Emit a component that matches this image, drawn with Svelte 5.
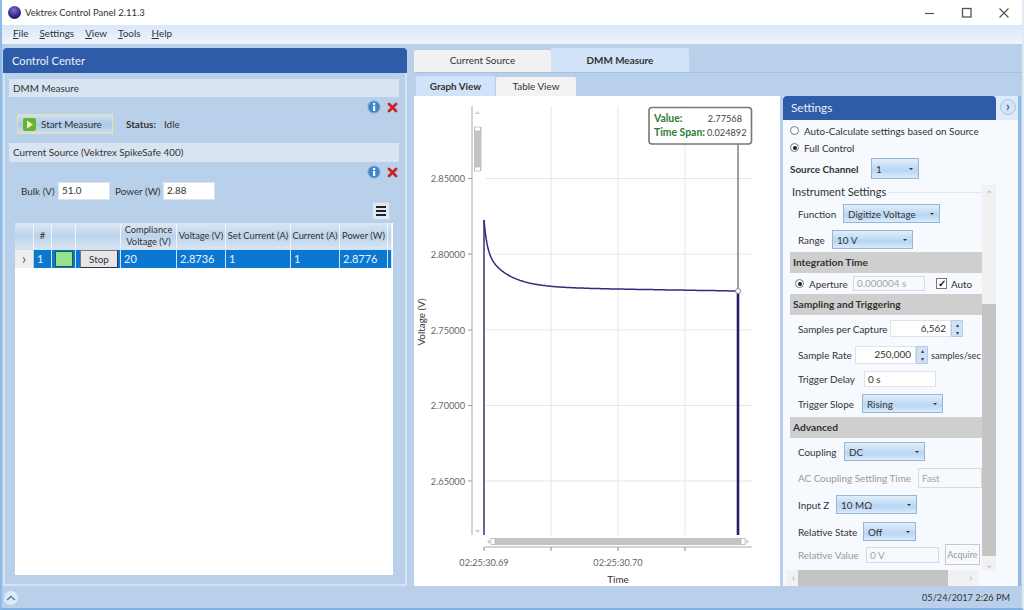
<script>
    const columns = ["", "#", "", "", "Compliance Voltage (V)", "Voltage (V)", "Set Current (A)", "Current (A)", "Power (W)", ""];

    // voltage settling after the current pulse starts
    const curvePoints = [];
    for (let x = 484; x <= 738; x += 1) {
        const d = x - 484;
        const y = 291 - 30 * Math.exp(-d / 3) - 37 * Math.exp(-d / 22) - (4 * (738 - x)) / 254;
        curvePoints.push(`${x} ${y.toFixed(1)}`);
    }
    const curve = "M" + curvePoints.join(" L");

    const yTicks = [
        { y: 178.5, label: "2.85000" },
        { y: 254, label: "2.80000" },
        { y: 330, label: "2.75000" },
        { y: 405.5, label: "2.70000" },
        { y: 481, label: "2.65000" }
    ];
    const xGrid = [551, 618, 685];
</script>

{#snippet select(text, width)}
    <div class="select" style="width: {width}px">
        <span>{text}</span><i class="caret"></i>
    </div>
{/snippet}

{#snippet info()}
    <svg class="tool" width="14" height="14" viewBox="0 0 14 14">
        <circle cx="7" cy="7" r="6.2" fill="#3f86c9" stroke="#8fbbe2" />
        <rect x="6" y="6" width="2.2" height="5" fill="#fff" />
        <circle cx="7.1" cy="4" r="1.2" fill="#fff" />
    </svg>
{/snippet}

{#snippet remove()}
    <svg class="tool" width="11" height="11" viewBox="0 0 11 11">
        <path d="M2 2 L9 9 M9 2 L2 9" stroke="#c8242b" stroke-width="2.8" stroke-linecap="round" />
    </svg>
{/snippet}

{#snippet spin()}
    <div class="spin"><b>▴</b><b>▾</b></div>
{/snippet}

<div class="window">
    <header class="titlebar">
        <div class="logo"></div>
        <span>Vektrex Control Panel 2.11.3</span>
        <div class="controls">
            <svg width="12" height="12" viewBox="0 0 12 12"><path d="M1 6.5 H10" stroke="#555" stroke-width="1.2" /></svg>
            <svg width="12" height="12" viewBox="0 0 12 12"><rect x="1.5" y="1.5" width="8.5" height="8.5" fill="none" stroke="#555" stroke-width="1.3" /></svg>
            <svg width="12" height="12" viewBox="0 0 12 12"><path d="M1.5 1.5 L10.5 10.5 M10.5 1.5 L1.5 10.5" stroke="#555" stroke-width="1.2" /></svg>
        </div>
    </header>

    <nav class="menu">
        <span><u>F</u>ile</span>
        <span><u>S</u>ettings</span>
        <span><u>V</u>iew</span>
        <span><u>T</u>ools</span>
        <span><u>H</u>elp</span>
    </nav>

    <main class="main">
        <section class="control">
            <h2 class="panel-head control-head">Control Center</h2>
            <div class="control-body">
                <div class="band">DMM Measure</div>
                <div class="tools">{@render info()}{@render remove()}</div>
                <div class="measure">
                    <button class="start">
                        <svg width="13" height="13" viewBox="0 0 13 13">
                            <rect width="13" height="13" rx="2" fill="#69b32b" />
                            <path d="M4 2.5 L10 6.5 L4 10.5 Z" fill="#e9f6c9" />
                        </svg>
                        Start Measure
                    </button>
                    <strong>Status:</strong>
                    <span>Idle</span>
                </div>
                <div class="band second">Current Source (Vektrex SpikeSafe 400)</div>
                <div class="tools">{@render info()}{@render remove()}</div>
                <div class="bulk">
                    <span>Bulk (V)</span>
                    <div class="input">51.0</div>
                    <span>Power (W)</span>
                    <div class="input">2.88</div>
                </div>
                <div class="grid-tools">
                    <div class="burger"><i></i><i></i><i></i></div>
                </div>
                <div class="table">
                    <div class="thead">
                        {#each columns as col}
                            <div class="th">{col}</div>
                        {/each}
                    </div>
                    <div class="tbody">
                        <div class="arrow">›</div>
                        <div class="td">1</div>
                        <div class="td"><div class="swatch"></div></div>
                        <div class="td"><button class="stop">Stop</button></div>
                        <div class="td">20</div>
                        <div class="td">2.8736</div>
                        <div class="td">1</div>
                        <div class="td">1</div>
                        <div class="td">2.8776</div>
                        <div class="td"></div>
                    </div>
                </div>
            </div>
        </section>

        <section class="center">
            <div class="tabs">
                <div class="tab">Current Source</div>
                <div class="tab active">DMM Measure</div>
            </div>
            <div class="subtabs">
                <div class="subtab active">Graph View</div>
                <div class="subtab">Table View</div>
            </div>
            <div class="chart">
                <svg width="366" height="490" viewBox="414 96 366 490">
                    {#each yTicks as t}
                        <line x1="486" x2="752" y1={t.y} y2={t.y} stroke="#e6e6e6" />
                        <line x1="468" x2="472" y1={t.y} y2={t.y} stroke="#999" />
                        <text x="465" y={t.y + 3.5} text-anchor="end" class="tick">{t.label}</text>
                    {/each}
                    {#each xGrid as x}
                        <line x1={x} x2={x} y1="106" y2="535" stroke="#e6e6e6" />
                        <line x1={x} x2={x} y1="547" y2="551" stroke="#888" />
                    {/each}
                    <line x1="484" x2="484" y1="547" y2="551" stroke="#888" />

                    <line x1="472" x2="472" y1="106" y2="535" stroke="#aaa" />
                    <line x1="484" x2="752" y1="547" y2="547" stroke="#aaa" />

                    <path d="M477.5 111 l-2.5 3 h5 Z" fill="#ccc" />
                    <rect x="474" y="127" width="7.5" height="44" fill="#c4c4c4" />
                    <rect x="474.5" y="127" width="6" height="4" fill="#fff" stroke="#aaa" stroke-width="0.6" />
                    <rect x="474.5" y="167" width="6" height="4" fill="#fff" stroke="#aaa" stroke-width="0.6" />
                    <path d="M477.5 533 l-2.5 -3 h5 Z" fill="#ccc" />

                    <rect x="491" y="538" width="254" height="7" fill="#c4c4c4" />
                    <rect x="491" y="538.5" width="4" height="6" fill="#fff" stroke="#aaa" stroke-width="0.6" />
                    <rect x="741" y="538.5" width="4" height="6" fill="#fff" stroke="#aaa" stroke-width="0.6" />
                    <path d="M487 541.5 l3 -2.5 v5 Z" fill="#ccc" />
                    <path d="M749 541.5 l-3 -2.5 v5 Z" fill="#ccc" />

                    <line x1="738" x2="738" y1="144" y2="291" stroke="#777" stroke-width="1.4" />
                    <line x1="484" x2="484" y1="535" y2="220" stroke="#55558f" stroke-width="1.8" />
                    <path d={curve} fill="none" stroke="#2e2c7e" stroke-width="1.5" />
                    <line x1="738" x2="738" y1="291" y2="535" stroke="#232265" stroke-width="2.6" />
                    <circle cx="738" cy="291" r="2.5" fill="#fff" stroke="#888" />

                    <rect x="649" y="107.5" width="102.5" height="36.5" rx="3" fill="#fff" stroke="#777" stroke-width="1.6" />
                    <text x="654" y="122" class="tip-key">Value:</text>
                    <text x="742" y="122" text-anchor="end" class="tip-val">2.77568</text>
                    <text x="654" y="136" class="tip-key">Time Span:</text>
                    <text x="746.5" y="136" text-anchor="end" class="tip-val">0.024892</text>

                    <text x="484" y="566" text-anchor="middle" class="tick">02:25:30.69</text>
                    <text x="618" y="566" text-anchor="middle" class="tick">02:25:30.70</text>
                    <text x="618" y="583" text-anchor="middle" class="axis">Time</text>
                    <text x="0" y="0" transform="translate(424.5 322) rotate(-90)" text-anchor="middle" class="axis">Voltage (V)</text>
                </svg>
            </div>
        </section>

        <section class="settings">
            <div class="settings-top">
                <h2 class="panel-head settings-head">Settings</h2>
                <div class="expand">›</div>
            </div>
            <div class="settings-body">
                <label class="radio-row"><i class="radio"></i>Auto-Calculate settings based on Source</label>
                <label class="radio-row"><i class="radio on"></i>Full Control</label>
                <div class="channel">
                    <strong>Source Channel</strong>
                    {@render select("1", 48)}
                </div>

                <div class="scroller">
                    <div class="legend"><span>Instrument Settings</span></div>
                    <div class="row fn">Function {@render select("Digitize Voltage", 97)}</div>
                    <div class="row range">Range {@render select("10 V", 81)}</div>
                    <h3 class="group">Integration Time</h3>
                    <div class="row aperture">
                        <i class="radio on"></i><span>Aperture</span>
                        <div class="input disabled">0.000004 s</div>
                        <i class="check">✓</i><span>Auto</span>
                    </div>
                    <h3 class="group">Sampling and Triggering</h3>
                    <div class="row capture">
                        Samples per Capture
                        <div class="spinner"><div class="input num">6,562</div>{@render spin()}</div>
                    </div>
                    <div class="row rate">
                        Sample Rate
                        <div class="spinner"><div class="input num">250,000</div>{@render spin()}</div>
                        <span class="unit">samples/sec</span>
                    </div>
                    <div class="row delay">Trigger Delay <div class="input">0 s</div></div>
                    <div class="row slope">Trigger Slope {@render select("Rising", 81)}</div>
                    <h3 class="group advanced">Advanced</h3>
                    <div class="row coupling">Coupling {@render select("DC", 81)}</div>
                    <div class="row settling muted">AC Coupling Settling Time <div class="input disabled">Fast</div></div>
                    <div class="row inputz">Input Z {@render select("10 MΩ", 81)}</div>
                    <div class="row relative"><span>Relative State</span> {@render select("Off", 53)}</div>
                    <div class="row relval muted">
                        Relative Value
                        <div class="input disabled">0 V</div>
                        <div class="acquire">Acquire</div>
                    </div>
                </div>

                <div class="vscroll">
                    <span class="vs-up">⌃</span>
                    <div class="vs-thumb"></div>
                    <span class="vs-down">⌄</span>
                </div>
                <div class="hscroll">
                    <span>‹</span>
                    <div class="hs-thumb"></div>
                    <span>›</span>
                </div>
            </div>
        </section>
    </main>

    <footer class="status">
        <div class="collapse">
            <svg width="10" height="6" viewBox="0 0 10 6"><path d="M1 5 L5 1.5 L9 5" fill="none" stroke="#5f7fa3" stroke-width="1.6" /></svg>
        </div>
        <span>05/24/2017 2:26 PM</span>
    </footer>
</div>

<style>
    :global(body) {
        margin: 0;
        overflow: hidden;
    }

    .window {
        width: 1024px;
        height: 610px;
        display: flex;
        flex-direction: column;
        font-family: Lato, "Open Sans", sans-serif;
        font-size: 9.9px;
        color: #333;
        background: #b9d0ea;
        box-sizing: border-box;
        border-left: 2px solid #8ebbe6;
        border-right: 2px solid #dfeaf5;
        border-bottom: 2px solid #7fb1e2;
        overflow: hidden;
    }

    .window * {
        box-sizing: border-box;
    }

    .titlebar {
        height: 25px;
        flex: none;
        background: #fff;
        display: flex;
        align-items: center;
        padding-left: 6px;
        gap: 4px;
        font-size: 9.5px;
    }

    .logo {
        width: 13px;
        height: 13px;
        border-radius: 50%;
        background: radial-gradient(circle at 45% 30%, #7a70d8, #2b1f78 65%, #1b1350);
    }

    .controls {
        margin-left: auto;
        display: flex;
        gap: 25px;
        padding-right: 12px;
    }

    .menu {
        height: 19px;
        flex: none;
        display: flex;
        align-items: flex-start;
        gap: 11px;
        padding: 2px 0 0 11px;
        background: linear-gradient(#d8e7f8, #eef5fc);
    }

    .main {
        flex: 1;
        display: flex;
        padding: 4px 0 0 1px;
        min-height: 0;
    }

    .panel-head {
        margin: 0;
        height: 25px;
        line-height: 25px;
        padding-left: 9px;
        color: #e8f0fa;
        font-size: 11.8px;
        font-weight: 400;
        background: #2f5ca8;
        border-radius: 4px 4px 0 0;
    }

    .control-head {
        font-size: 11.2px;
    }

    .control {
        width: 404px;
        height: 538px;
        display: flex;
        flex-direction: column;
    }

    .control-body {
        flex: 1;
        padding: 6px 6px 9px 4px;
        border: 2px solid #d4e3f3;
        border-top: none;
        background: #b9d0ea;
        display: flex;
        flex-direction: column;
    }

    .band {
        height: 18px;
        line-height: 18px;
        padding-left: 4px;
        background: #d8e4f1;
    }

    .band.second {
        height: 19px;
    }

    .tools {
        height: 20px;
        display: flex;
        justify-content: flex-end;
        align-items: center;
        gap: 6px;
        padding-right: 1px;
    }

    .measure {
        height: 26px;
        display: flex;
        align-items: flex-start;
        padding-left: 8px;
        line-height: 14px;
    }

    .measure strong {
        font-weight: 700;
        margin-left: 13px;
        width: 38px;
    }

    .start {
        width: 96px;
        height: 20px;
        margin-top: -3px;
        padding: 0 0 0 5px;
        display: flex;
        align-items: center;
        gap: 5px;
        font: inherit;
        color: #333;
        border: 1px solid #e8e3a4;
        background: linear-gradient(#cfe0f2, #a9c8e8 55%, #cfe0f2);
    }

    .bulk {
        height: 19px;
        margin-top: -1px;
        display: grid;
        grid-template-columns: 37px 57px 48px 52px;
        align-items: center;
        padding-left: 12px;
    }

    .bulk .input {
        width: 52px;
        height: 18px;
    }

    .input {
        background: #fff;
        border: 1px solid #dbe3ec;
        height: 100%;
        line-height: 15px;
        padding-left: 3px;
    }

    .grid-tools {
        height: 22px;
        display: flex;
        justify-content: flex-end;
        align-items: center;
        padding-right: 9px;
    }

    .burger {
        width: 18px;
        height: 18px;
        background: #dfe9f4;
        border: 1px solid #c3d3e4;
        display: flex;
        flex-direction: column;
        gap: 2px;
        align-items: center;
        justify-content: center;
    }

    .burger i {
        width: 10px;
        height: 2px;
        background: #222;
    }

    .table {
        flex: 1;
        margin: 1px 6px 0 6px;
        background: #fff;
    }

    .thead,
    .tbody {
        display: grid;
        grid-template-columns: 19px 18px 24px 45px 56px 49px 65px 49px 48px 4px;
    }

    .thead {
        height: 26px;
    }

    .th {
        background: linear-gradient(#dbe8f5, #bcd3ea 50%, #d7e5f3);
        border-right: 1px solid #eef4fa;
        display: flex;
        align-items: center;
        justify-content: center;
        text-align: center;
        font-size: 9.3px;
        line-height: 12px;
    }

    .tbody {
        height: 19px;
        border-top: 1px solid #cfe0f0;
    }

    .td {
        background: #0a78d0;
        color: #e8f3fc;
        border-right: 1px solid #cfe3f5;
        font-size: 11px;
        line-height: 18px;
        padding-left: 3px;
        position: relative;
    }

    .arrow {
        background: #eee;
        color: #666;
        text-align: center;
        font-size: 16px;
        line-height: 15px;
        border-right: 1px solid #ccc;
    }

    .swatch {
        position: absolute;
        left: 3px;
        top: 1px;
        width: 18px;
        height: 16px;
        background: #94e28a;
        border: 1px solid #1f5d4c;
    }

    .stop {
        position: absolute;
        left: 4px;
        top: 0;
        width: 38px;
        height: 18px;
        padding: 0;
        font: inherit;
        font-size: 9.9px;
        line-height: 14px;
        color: #333;
        background: #e6e6e6;
        border: 1px solid #778;
        border-right-color: #334;
        border-bottom-color: #334;
    }

    .center {
        width: 366px;
        margin-left: 7px;
        display: flex;
        flex-direction: column;
        height: 538px;
    }

    .tabs {
        height: 25px;
        flex: none;
        display: flex;
        align-items: flex-end;
        border-bottom: 1px solid #a5c1de;
        width: 608px;
    }

    .tab {
        width: 137px;
        height: 22px;
        background: #f1f1f1;
        text-align: center;
        line-height: 21px;
        border-radius: 2px 2px 0 0;
    }

    .tab.active {
        width: 138px;
        height: 24px;
        line-height: 25px;
        background: #d0e3f8;
        font-weight: 700;
    }

    .subtabs {
        display: flex;
        height: 23px;
        flex: none;
        align-items: flex-end;
        padding-left: 2px;
        gap: 1px;
    }

    .subtab {
        width: 80px;
        height: 19px;
        background: #f3f3f3;
        text-align: center;
        line-height: 19px;
        border-radius: 2px 2px 0 0;
    }

    .subtab.active {
        width: 79px;
        height: 20px;
        line-height: 20px;
        background: #d0e3f8;
        font-weight: 700;
    }

    .chart {
        background: #fff;
        height: 490px;
    }

    .chart svg {
        display: block;
    }

    .chart text {
        font-family: Lato, "Open Sans", sans-serif;
    }

    .tick {
        font-size: 9.2px;
        fill: #666;
    }

    .axis {
        font-size: 9.9px;
        fill: #333;
    }

    .tip-key {
        font-size: 10.4px;
        font-weight: 700;
        fill: #2e7d32;
    }

    .tip-val {
        font-size: 9.2px;
        fill: #444;
    }

    .settings {
        width: 238px;
        margin-left: 3px;
        margin-top: 48px;
        height: 490px;
        display: flex;
        flex-direction: column;
        border-right: 3px solid #8db8e8;
    }

    .settings-top {
        display: flex;
        height: 24px;
        flex: none;
        background: #dfeafa;
    }

    .settings-head {
        width: 213px;
        height: 24px;
        line-height: 24px;
        padding-left: 8px;
    }

    .expand {
        width: 16px;
        height: 16px;
        margin: 3px 0 0 4px;
        border-radius: 50%;
        background: #d5e5f8;
        border: 1px solid #a9c5e4;
        color: #2f5ca8;
        font-size: 13px;
        line-height: 12px;
        text-align: center;
        font-weight: 700;
    }

    .settings-body {
        position: relative;
        flex: 1;
        background: #f6f9fd;
        padding: 2px 0 0 7px;
        overflow: hidden;
    }

    .radio-row {
        display: flex;
        align-items: center;
        gap: 5px;
        height: 17px;
    }

    .radio {
        width: 9px;
        height: 9px;
        border-radius: 50%;
        border: 1px solid #777;
        background: #fff;
        flex: none;
        display: block;
        position: relative;
    }

    .radio.on::after {
        content: "";
        position: absolute;
        left: 1.5px;
        top: 1.5px;
        width: 4px;
        height: 4px;
        border-radius: 50%;
        background: #222;
    }

    .channel {
        display: grid;
        grid-template-columns: 81px auto;
        justify-content: start;
        align-items: center;
        height: 21px;
        margin-top: 2px;
    }

    .channel strong {
        font-weight: 700;
    }

    .channel .select {
        height: 21px;
    }

    .select {
        height: 19px;
        flex: none;
        display: flex;
        align-items: center;
        justify-content: space-between;
        padding: 0 5px 0 4px;
        border: 1px solid #96b6d4;
        background: linear-gradient(#e2eefa, #b7d6f3 60%, #dbeafa);
        color: #333;
    }

    .caret {
        width: 0;
        height: 0;
        border-left: 2px solid transparent;
        border-right: 2px solid transparent;
        border-top: 2px solid #333;
    }

    .scroller {
        margin-top: 6px;
        width: 192px;
        height: 385px;
        overflow: hidden;
    }

    .legend {
        height: 19px;
        font-size: 11px;
        padding-left: 2px;
        position: relative;
        line-height: 14px;
    }

    .legend::after {
        content: "";
        position: absolute;
        left: 98px;
        right: 0;
        top: 7px;
        height: 1px;
        background: #e3e8ee;
    }

    .group {
        margin: 0;
        height: 21px;
        line-height: 21px;
        padding-left: 3px;
        font-size: 10.2px;
        font-weight: 700;
        background: #cfcfcf;
    }

    .row {
        display: grid;
        align-items: center;
        justify-content: start;
        padding-left: 8px;
        white-space: nowrap;
    }

    .fn { height: 19px; margin-bottom: 7px; grid-template-columns: 45px auto; }
    .range { height: 19px; margin-bottom: 3px; grid-template-columns: 34px auto; }

    .aperture {
        height: 21px;
        padding-left: 5px;
        grid-template-columns: 14px 44px 83px 15px auto;
    }

    .aperture .input {
        width: 72px;
        height: 15px;
        line-height: 13px;
    }

    .check {
        width: 11px;
        height: 11px;
        border: 1px solid #777;
        background: #fff;
        font-style: normal;
        font-size: 10px;
        font-weight: 700;
        line-height: 9px;
        text-align: center;
        color: #111;
    }

    .capture { height: 17px; margin-top: 5px; grid-template-columns: 92px auto; }
    .rate { height: 18px; margin-top: 9px; grid-template-columns: 57px 76px auto; }
    .unit { font-size: 9.3px; }
    .delay { height: 16px; margin-top: 7px; grid-template-columns: 66px auto; }
    .delay .input { width: 72px; line-height: 14px; }
    .slope { height: 19px; margin-top: 7px; grid-template-columns: 64px auto; }
    .advanced { margin-top: 4px; }
    .coupling { height: 19px; margin-top: 4px; grid-template-columns: 46px auto; }
    .settling { height: 20px; margin-top: 7px; grid-template-columns: 120px auto; }
    .settling .input { width: 64px; line-height: 18px; }
    .inputz { height: 19px; margin-top: 7px; grid-template-columns: 38px auto; }
    .relative { height: 19px; margin-top: 8px; grid-template-columns: 65px auto; }
    .relval { height: 21px; margin-top: 3px; grid-template-columns: 68px 79px auto; }
    .relval .input { width: 73px; height: 16px; line-height: 14px; }

    .muted {
        color: #9a9a9a;
    }

    .input.disabled {
        background: #f7fafc;
        border-color: #d3dbe3;
        color: #a3a3a3;
    }

    .acquire {
        width: 35px;
        height: 21px;
        line-height: 19px;
        text-align: center;
        font-size: 9px;
        border: 1px solid #c9c9c9;
    }

    .spinner {
        display: flex;
        width: 73px;
        height: 100%;
    }

    .input.num {
        flex: 1;
        text-align: right;
        padding-right: 4px;
    }

    .spin {
        width: 12px;
        display: flex;
        flex-direction: column;
        background: #cfe1f3;
        border: 1px solid #b6cde3;
    }

    .spin b {
        flex: 1;
        font-size: 6px;
        line-height: 7px;
        text-align: center;
        color: #345;
        font-weight: 400;
    }

    .vscroll {
        position: absolute;
        left: 199px;
        top: 65px;
        width: 14px;
        height: 385px;
        background: #f1f1f1;
        color: #bbb;
        text-align: center;
    }

    .vs-up {
        position: absolute;
        left: 3px;
        top: 3px;
    }

    .vs-down {
        position: absolute;
        left: 3px;
        bottom: 0;
    }

    .vs-thumb {
        position: absolute;
        left: 0;
        right: 0;
        top: 119px;
        height: 252px;
        background: #c4c4c4;
    }

    .hscroll {
        position: absolute;
        left: 3px;
        top: 450px;
        width: 192px;
        height: 16px;
        background: #f1f1f1;
        color: #aaa;
        display: flex;
        justify-content: space-between;
        padding: 0 6px;
        line-height: 14px;
    }

    .hs-thumb {
        position: absolute;
        left: 12px;
        top: 0;
        width: 150px;
        height: 16px;
        background: #c4c4c4;
    }

    .status {
        height: 21px;
        flex: none;
        display: flex;
        align-items: center;
        justify-content: space-between;
        padding: 0 12px 0 2px;
        font-size: 9.2px;
    }

    .collapse {
        width: 14px;
        height: 14px;
        border-radius: 50%;
        background: #dce9f7;
        display: flex;
        align-items: center;
        justify-content: center;
    }
</style>
